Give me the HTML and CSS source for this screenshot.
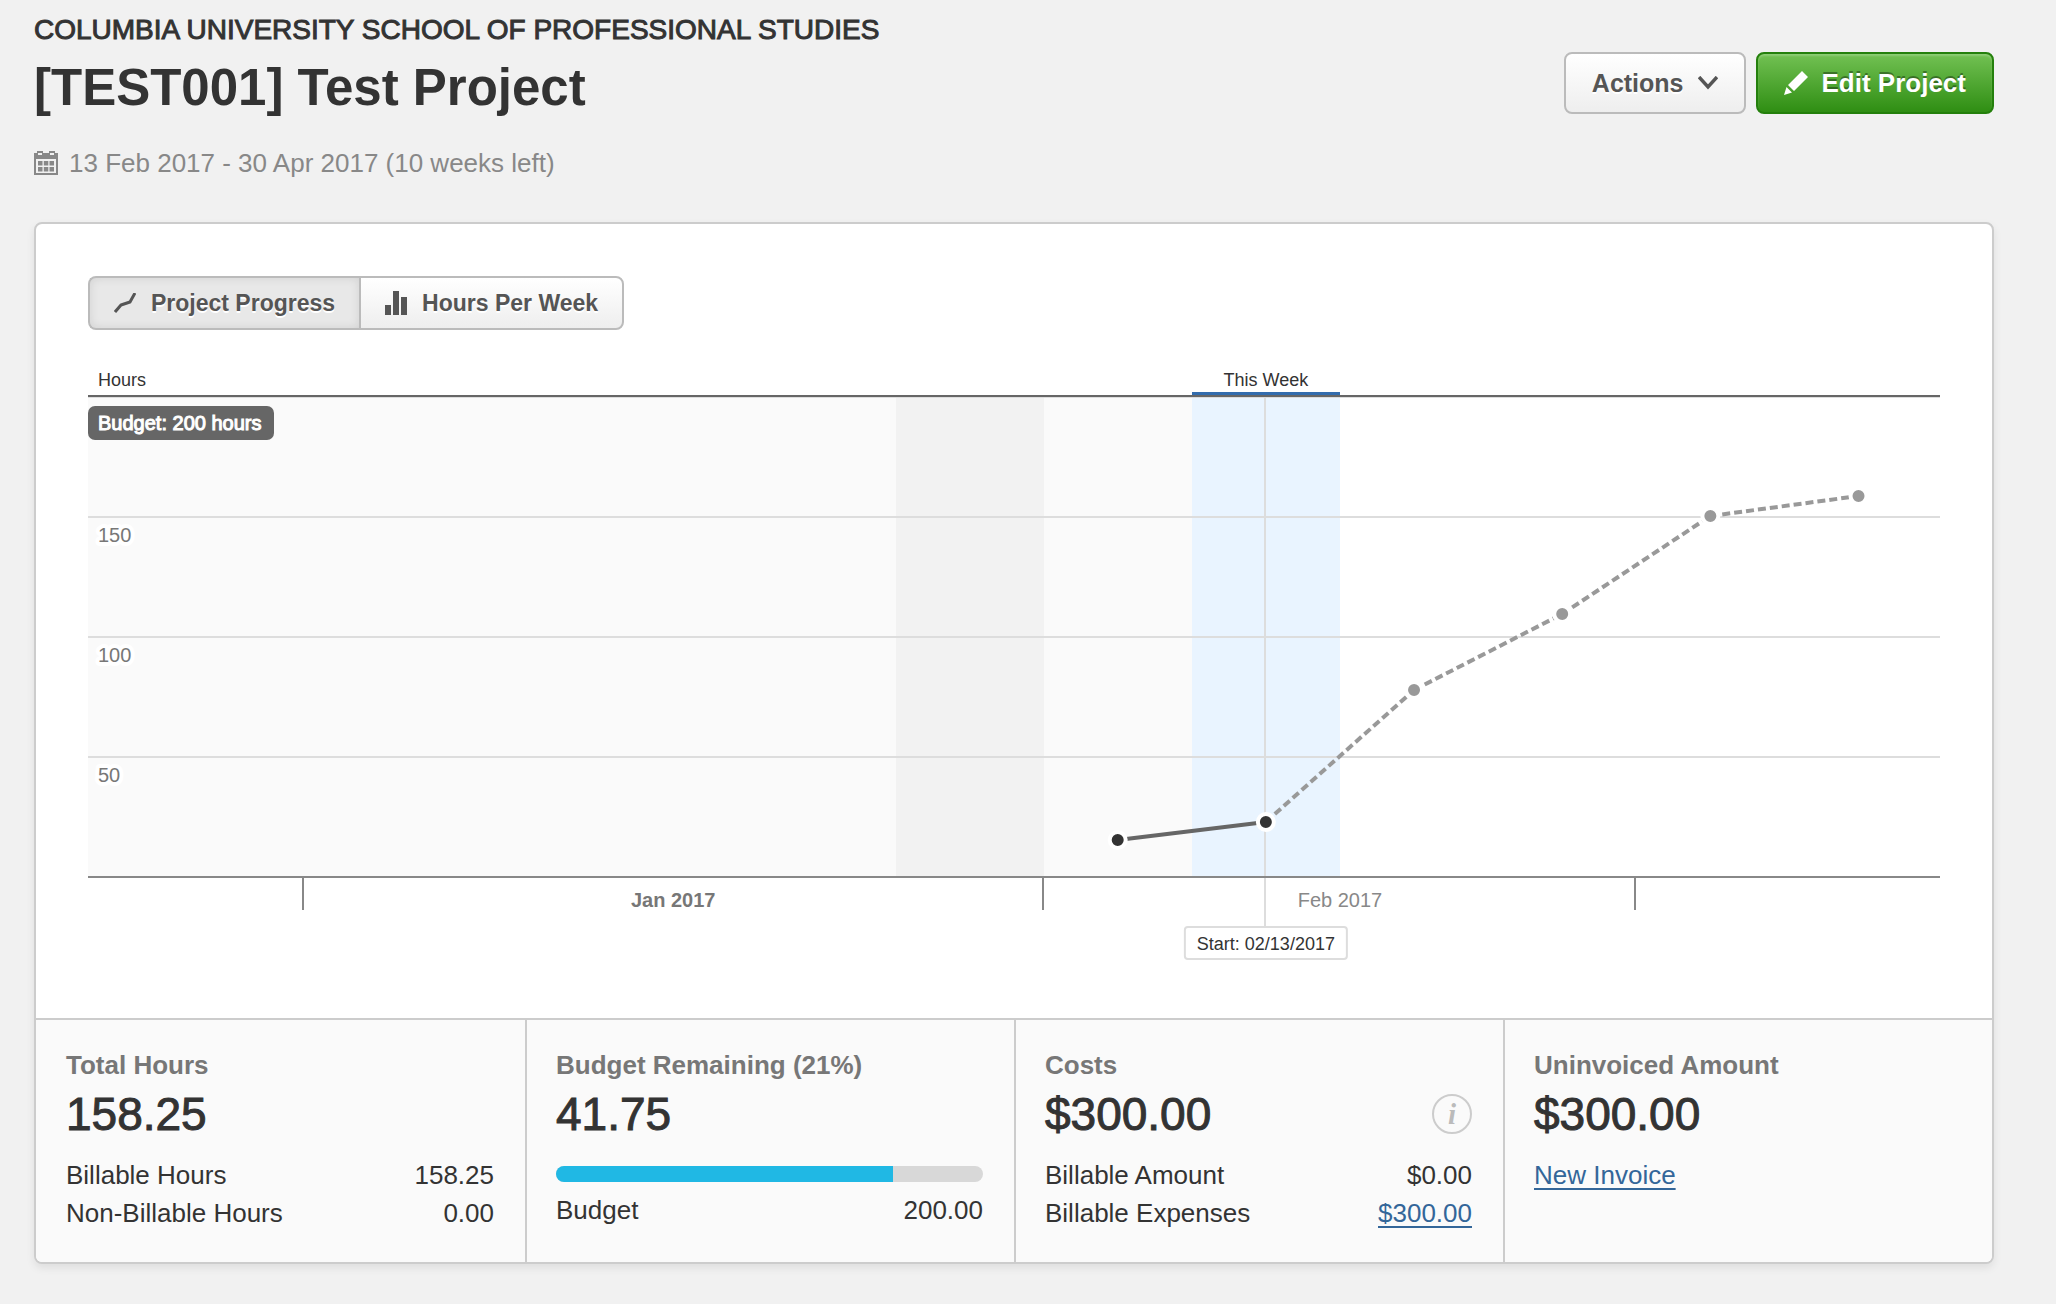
FILE: index.html
```html
<!DOCTYPE html>
<html lang="en">
<head>
<meta charset="utf-8">
<title>[TEST001] Test Project</title>
<link rel="stylesheet" href="styles.css">
</head>
<body>
<div class="page">
  <header class="header">
    <div class="heading">
      <p class="client">COLUMBIA UNIVERSITY SCHOOL OF PROFESSIONAL STUDIES</p>
      <h1 class="project">[TEST001] Test Project</h1>
      <p class="dates">
        <svg class="icon-calendar" width="24" height="24" viewBox="0 0 24 24" fill="currentColor" aria-hidden="true">
          <path fill-rule="evenodd" d="M0 2h3V0h6v2h6V0h6v2h3v22H0zM2 8v14h20V8zM4 2v2h4V2zm12 0v2h4V2z"/>
          <path d="M4 10h4.500v4.500H4zm5.800 0h4.500v4.500H9.800zm5.700 0H20v4.500h-4.500zM4 16h4.500v4.500H4zm5.800 0h4.500v4.500H9.800zm5.700 0H20v4.500h-4.500z"/>
        </svg>
        <span>13 Feb 2017 - 30 Apr 2017 (10 weeks left)</span>
      </p>
    </div>
    <div class="actions">
      <button class="button button-plain" type="button">Actions
        <svg width="20" height="14" viewBox="0 0 20 14" fill="none" stroke="currentColor" stroke-width="3.500" aria-hidden="true"><path d="M1 1l9 10 9-10"/></svg>
      </button>
      <button class="button button-primary" type="button">
        <svg width="24" height="24" viewBox="0 0 24 24" fill="currentColor" aria-hidden="true"><path d="M18 0l6 6L10 20l-6-6zM2.500 16l5.500 5.500L0 24z"/></svg>
        Edit Project</button>
    </div>
  </header>

  <main class="card">
    <section class="chart-panel">
      <div class="segmented">
        <button class="segment segment-active" type="button" aria-pressed="true">
          <svg width="22" height="20" viewBox="0 0 22 20" fill="none" stroke="currentColor" stroke-width="3" stroke-linejoin="round" aria-hidden="true"><path d="M1 19l6-7 9-3 5-9"/></svg>
          Project Progress</button>
        <button class="segment" type="button" aria-pressed="false">
          <svg width="22" height="24" viewBox="0 0 22 24" fill="currentColor" aria-hidden="true"><path d="M0 14h6v10H0zM8 0h6v24H8zM16 6h6v18h-6z"/></svg>
          Hours Per Week</button>
      </div>

      <svg class="chart" role="img" aria-label="Project progress in hours by week">
        <g class="bands">
          <rect class="band-past" x="0" y="31" width="59.6%" height="479"/>
          <rect class="band-shade" x="43.65%" y="31" width="7.95%" height="479"/>
          <rect class="band-now" x="59.6%" y="31" width="8%" height="479"/>
          <rect class="grid" x="0" y="30" width="100%" height="2"/>
          <rect class="grid" x="0" y="150" width="100%" height="2"/>
          <rect class="grid" x="0" y="270" width="100%" height="2"/>
          <rect class="grid" x="0" y="390" width="100%" height="2"/>
          <rect class="now-bar" x="59.6%" y="26" width="8%" height="3"/>
          <rect class="top-rule" x="0" y="29" width="100%" height="2"/>
        </g>
        <svg class="marker" x="63.6%" y="0">
          <rect class="grid" x="-2" y="31" width="2" height="530"/>
          <rect class="start-box" x="-81" y="561" width="162" height="32" rx="3"/>
          <text class="text-small" x="0" y="584" text-anchor="middle">Start: 02/13/2017</text>
        </svg>
        <g class="bands">
          <rect class="axis" x="0" y="510" width="100%" height="2"/>
          <svg class="marker" x="11.6%"><rect class="axis" x="-1" y="512" width="2" height="32"/></svg>
          <svg class="marker" x="51.55%"><rect class="axis" x="-1" y="512" width="2" height="32"/></svg>
          <svg class="marker" x="83.55%"><rect class="axis" x="-1" y="512" width="2" height="32"/></svg>
        </g>

        <text class="text-small" x="10" y="20">Hours</text>
        <text class="text-small" x="63.6%" y="20" text-anchor="middle">This Week</text>
        <text class="text-scale" x="10" y="176">150</text>
        <text class="text-scale" x="10" y="296">100</text>
        <text class="text-scale" x="10" y="416">50</text>
        <rect class="budget-tag" x="0" y="40" width="186" height="34" rx="7"/>
        <text class="budget-text" x="10" y="64">Budget: 200 hours</text>
        <text class="text-month text-month-current" x="31.6%" y="541" text-anchor="middle">Jan 2017</text>
        <text class="text-month" x="67.6%" y="541" text-anchor="middle">Feb 2017</text>

        <g class="planned">
          <line x1="63.6%" y1="456" x2="71.6%" y2="324"/>
          <line x1="71.6%" y1="324" x2="79.6%" y2="248"/>
          <line x1="79.6%" y1="248" x2="87.6%" y2="150"/>
          <line x1="87.6%" y1="150" x2="95.6%" y2="130"/>
          <circle cx="71.6%" cy="324" r="8"/>
          <circle cx="79.6%" cy="248" r="8"/>
          <circle cx="87.6%" cy="150" r="8"/>
          <circle cx="95.6%" cy="130" r="8"/>
        </g>
        <g class="tracked">
          <line x1="55.6%" y1="474" x2="63.6%" y2="456"/>
          <circle cx="55.6%" cy="474" r="8"/>
          <circle cx="63.6%" cy="456" r="8"/>
        </g>
      </svg>
    </section>

    <section class="summary">
      <div class="stat">
        <h2 class="stat-title">Total Hours</h2>
        <p class="stat-value">158.25</p>
        <dl class="rows">
          <div class="row"><dt>Billable Hours</dt><dd>158.25</dd></div>
          <div class="row"><dt>Non-Billable Hours</dt><dd>0.00</dd></div>
        </dl>
      </div>
      <div class="stat">
        <h2 class="stat-title">Budget Remaining (21%)</h2>
        <p class="stat-value">41.75</p>
        <div class="bar"><div class="bar-fill" style="width: 79%"></div></div>
        <dl class="rows rows-tight">
          <div class="row"><dt>Budget</dt><dd>200.00</dd></div>
        </dl>
      </div>
      <div class="stat">
        <h2 class="stat-title">Costs</h2>
        <div class="value-line">
          <p class="stat-value">$300.00</p>
          <button class="info" type="button" aria-label="About costs">i</button>
        </div>
        <dl class="rows">
          <div class="row"><dt>Billable Amount</dt><dd>$0.00</dd></div>
          <div class="row"><dt>Billable Expenses</dt><dd><a class="link" href="#expenses">$300.00</a></dd></div>
        </dl>
      </div>
      <div class="stat">
        <h2 class="stat-title">Uninvoiced Amount</h2>
        <p class="stat-value">$300.00</p>
        <p class="rows"><a class="link" href="#new-invoice">New Invoice</a></p>
      </div>
    </section>
  </main>
</div>
</body>
</html>
```
FILE: styles.css
```css
* { box-sizing: border-box; }

body {
  margin: 0;
  background: #f1f1f1;
  color: #333;
  font: 26px/38px "Liberation Sans", Arial, sans-serif;
}

h1, h2, p, dl, dd { margin: 0; }

.page { padding: 12px 62px 38px 34px; }

/* Header */
.header {
  display: flex;
  justify-content: space-between;
  align-items: flex-start;
  margin-bottom: 42px;
}
.client { font-size: 28px; line-height: 36px; -webkit-text-stroke: 1px #333; }
.project { margin-top: 10px; font-size: 51px; line-height: 60px; }
.dates {
  display: flex;
  align-items: center;
  gap: 11px;
  margin-top: 28px;
  line-height: 34px;
  color: #888;
}
.actions { display: flex; gap: 10px; padding-top: 40px; }

.button {
  display: flex;
  align-items: center;
  height: 62px;
  border: 2px solid;
  border-radius: 8px;
  padding: 0 26px;
  font: bold 25px/38px "Liberation Sans", Arial, sans-serif;
  cursor: pointer;
}
.button-plain {
  gap: 14px;
  border-color: #bbb;
  background: linear-gradient(#fff, #eee);
  color: #555;
  text-shadow: 0 2px 0 #fff;
}
.button-primary {
  gap: 14px;
  border-color: #24800c;
  background: linear-gradient(#72c153, #2f8e13);
  box-shadow: inset 0 2px 2px rgba(255, 255, 255, 0.2);
  color: #fff;
  font-size: 26px;
  text-shadow: 0 -2px 0 rgba(0, 0, 0, 0.35);
}

/* Card */
.card {
  border: 2px solid #ccc;
  border-radius: 8px;
  background: #fff;
  box-shadow: 0 4px 8px rgba(0, 0, 0, 0.08);
  overflow: hidden;
}
.chart-panel { padding: 52px 52px 42px; }

.segmented { display: flex; }
.segment {
  display: flex;
  align-items: center;
  gap: 15px;
  height: 54px;
  border: 2px solid #bbb;
  border-radius: 0 8px 8px 0;
  padding: 0 24px;
  background: linear-gradient(#fff, #eee);
  color: #555;
  font: bold 23px/38px "Liberation Sans", Arial, sans-serif;
  text-shadow: 0 2px 0 #fff;
  cursor: pointer;
}
.segment-active {
  border-right-width: 0;
  border-radius: 8px 0 0 8px;
  background: #e8e8e8;
  box-shadow: inset 0 0 10px rgba(0, 0, 0, 0.1);
}

/* Chart */
.chart {
  display: block;
  width: 100%;
  height: 610px;
  margin-top: 36px;
  overflow: visible;
}
.bands { shape-rendering: crispEdges; }
.band-past { fill: #fafafa; }
.band-shade { fill: #f2f2f2; }
.band-now { fill: #e9f4ff; }
.grid { fill: #ddd; shape-rendering: crispEdges; }
.top-rule { fill: #666; }
.axis { fill: #888; }
.now-bar { fill: #336cad; }
.marker { overflow: visible; }
.start-box { fill: #fff; stroke: #ddd; stroke-width: 2; }
.text-small { fill: #333; font-size: 18px; }
.text-scale {
  fill: #777;
  stroke: #fff;
  stroke-width: 8px;
  stroke-linejoin: round;
  paint-order: stroke;
  font-size: 20px;
}
.text-month { fill: #888; font-size: 20px; }
.text-month-current { fill: #777; font-weight: bold; }
.budget-tag { fill: #666; }
.budget-text { fill: #fff; stroke: #fff; stroke-width: 1px; font-size: 20px; }
.planned line { stroke: #999; stroke-width: 4; stroke-dasharray: 8 4; }
.planned circle { fill: #999; stroke: #fff; stroke-width: 4; }
.tracked line { stroke: #666; stroke-width: 4; }
.tracked circle { fill: #333; stroke: #fff; stroke-width: 4; }

/* Summary */
.summary {
  display: grid;
  grid-template-columns: repeat(4, 1fr);
  border-top: 2px solid #ccc;
  background: #fafafa;
}
.stat { padding: 26px 31px 30px 30px; }
.stat + .stat { border-left: 2px solid #ccc; padding-left: 29px; }
.stat-title { color: #777; font-size: 26px; line-height: 38px; }
.stat-value { font-size: 46px; line-height: 60px; -webkit-text-stroke: 1px #333; }
.value-line { display: flex; justify-content: space-between; align-items: center; }
.rows { margin-top: 12px; }
.rows-tight { margin-top: 9px; }
.row { display: flex; justify-content: space-between; }
.link { color: #369; text-decoration-thickness: 2px; text-underline-offset: 4px; }

.bar {
  height: 16px;
  margin-top: 22px;
  border-radius: 8px;
  background: #d8d8d8;
  overflow: hidden;
}
.bar-fill { height: 16px; background: #20b8e4; }

.info {
  width: 40px;
  height: 40px;
  border: 2px solid #ccc;
  border-radius: 50%;
  padding: 0;
  background: none;
  color: #bbb;
  font: italic bold 29px/32px "Liberation Serif", serif;
  cursor: pointer;
}
```
